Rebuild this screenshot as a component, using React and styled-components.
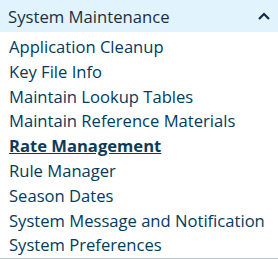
import styled, { createGlobalStyle } from "styled-components";

const Global = createGlobalStyle`
  body {
    margin: 0;
    background: #ffffff;
    font-family: "Open Sans", "Noto Sans", sans-serif;
  }
`;

const Panel = styled.nav`
  width: 278px;
  border-bottom: 1px solid #b7c3cb;
`;

const Header = styled.div`
  height: 32px;
  display: flex;
  align-items: center;
  justify-content: space-between;
  padding: 0 7px 0 8px;
  background: #e1f3fc;
  color: #1c2f3e;
  font-size: 16.7px;
`;

const List = styled.ul`
  list-style: none;
  margin: 0;
  padding: 3px 0 0 9px;
`;

const Item = styled.li`
  height: 24.8px;
  line-height: 24.8px;
  font-size: 16.6px;
  color: ${(p) => (p.$active ? "#0d3b57" : "#013b5e")};
  font-weight: ${(p) => (p.$active ? 700 : 400)};
  text-decoration: ${(p) => (p.$active ? "underline" : "none")};
  white-space: nowrap;
`;

const items = [
  "Application Cleanup",
  "Key File Info",
  "Maintain Lookup Tables",
  "Maintain Reference Materials",
  "Rate Management",
  "Rule Manager",
  "Season Dates",
  "System Message and Notification",
  "System Preferences",
];

export default function App() {
  return (
    <>
      <Global />
      <Panel>
        <Header>
          <span>System Maintenance</span>
          <svg width="14" height="10" viewBox="0 0 14 10">
            <path d="M2 8 L7 3 L12 8" fill="none" stroke="#0d2f45" strokeWidth="2.2" />
          </svg>
        </Header>
        <List>
          {items.map((t) => (
            <Item key={t} $active={t === "Rate Management"}>
              {t}
            </Item>
          ))}
        </List>
      </Panel>
    </>
  );
}
